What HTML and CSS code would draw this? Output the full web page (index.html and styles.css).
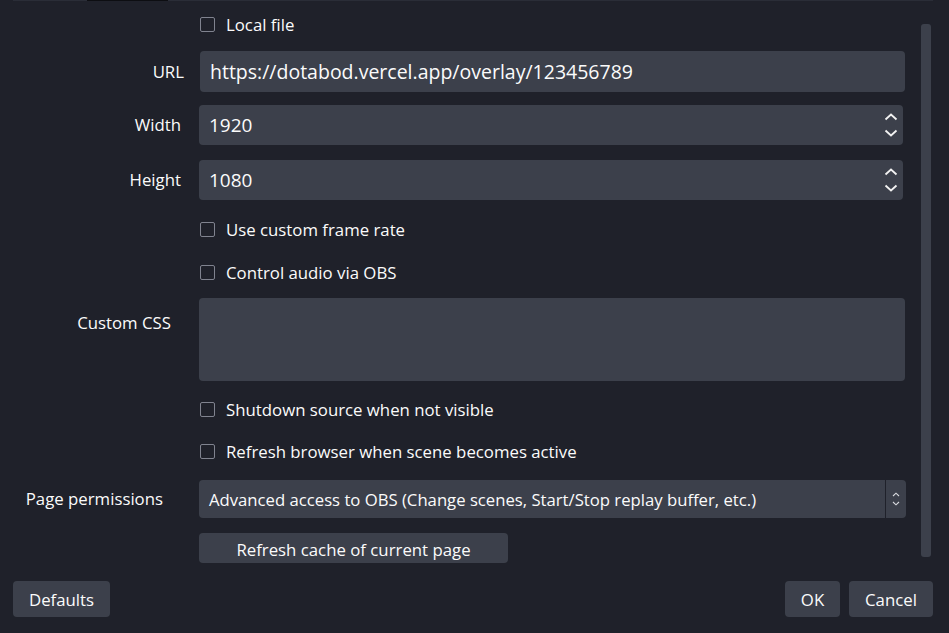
FILE: index.html
```html
<!DOCTYPE html>
<html>
<head>
<meta charset="utf-8">
<link rel="stylesheet" href="styles.css">
</head>
<body>
<div class="dialog">
  <div class="scroll-area">
    <div class="form">
      <div class="top-edge"><span class="top-dark"></span></div>

      <div class="row row-check r-local">
        <div class="label"></div>
        <label class="check"><span class="box"></span>Local file</label>
      </div>

      <div class="row r-url">
        <div class="label pad-url">URL</div>
        <div class="input url-input">https://dotabod.vercel.app/overlay/123456789</div>
      </div>

      <div class="row r-width">
        <div class="label pad-wh">Width</div>
        <div class="input spin">
          <span class="value">1920</span>
          <span class="spin-arrows">
            <svg width="14" height="26" viewBox="0 0 14 26"><path d="M1.5 7.5 L7 2.5 L12.5 7.5" fill="none" stroke="#f2f2f2" stroke-width="1.8"/><path d="M1.5 18.5 L7 23.5 L12.5 18.5" fill="none" stroke="#f2f2f2" stroke-width="1.8"/></svg>
          </span>
        </div>
      </div>

      <div class="row r-height">
        <div class="label pad-wh">Height</div>
        <div class="input spin">
          <span class="value">1080</span>
          <span class="spin-arrows">
            <svg width="14" height="26" viewBox="0 0 14 26"><path d="M1.5 7.5 L7 2.5 L12.5 7.5" fill="none" stroke="#f2f2f2" stroke-width="1.8"/><path d="M1.5 18.5 L7 23.5 L12.5 18.5" fill="none" stroke="#f2f2f2" stroke-width="1.8"/></svg>
          </span>
        </div>
      </div>

      <div class="row row-check r-fps">
        <div class="label"></div>
        <label class="check"><span class="box"></span>Use custom frame rate</label>
      </div>

      <div class="row row-check r-audio">
        <div class="label"></div>
        <label class="check"><span class="box"></span>Control audio via OBS</label>
      </div>

      <div class="row row-top r-css">
        <div class="label pad-css">Custom CSS</div>
        <div class="input textarea"></div>
      </div>

      <div class="row row-check r-shutdown">
        <div class="label"></div>
        <label class="check"><span class="box"></span>Shutdown source when not visible</label>
      </div>

      <div class="row row-check r-refresh">
        <div class="label"></div>
        <label class="check"><span class="box"></span>Refresh browser when scene becomes active</label>
      </div>

      <div class="row r-perm">
        <div class="label pad-perm">Page permissions</div>
        <div class="input select">
          <span class="select-text">Advanced access to OBS (Change scenes, Start/Stop replay buffer, etc.)</span>
          <span class="select-arrows">
            <svg width="8" height="14" viewBox="0 0 8 14"><path d="M1 4 L4 1.2 L7 4" fill="none" stroke="#d8d9de" stroke-width="1.1"/><path d="M1 10 L4 12.8 L7 10" fill="none" stroke="#d8d9de" stroke-width="1.1"/></svg>
          </span>
        </div>
      </div>

      <div class="row r-cache">
        <div class="label"></div>
        <button class="btn cache-btn">Refresh cache of current page</button>
      </div>
    </div>
    <div class="scrollbar"><div class="thumb"></div></div>
  </div>

  <div class="footer">
    <button class="btn foot-btn defaults">Defaults</button>
    <div class="footer-right">
      <button class="btn foot-btn ok">OK</button>
      <button class="btn foot-btn cancel">Cancel</button>
    </div>
  </div>
</div>
</body>
</html>
```

FILE: styles.css
```css
* { box-sizing: border-box; }

html, body {
  margin: 0;
  padding: 0;
  background: #1f212a;
}

body {
  width: 949px;
  height: 633px;
  overflow: hidden;
  font-family: "Open Sans", "Noto Sans", sans-serif;
  color: #fbfbfb;
  font-size: 16.8px;
}

.dialog {
  display: flex;
  flex-direction: column;
  height: 633px;
}

.scroll-area {
  display: flex;
  height: 565px;
}

.form {
  width: 921px;
  display: flex;
  flex-direction: column;
}

.top-edge {
  height: 1px;
  margin-left: 13px;
  width: 920px;
  background: #2a2d37;
  display: flex;
}

.top-dark {
  margin-left: 74px;
  width: 81px;
  height: 1px;
  background: #0d0e12;
}

.row {
  display: flex;
  align-items: center;
}

.row-top { align-items: flex-start; }

.label {
  width: 199px;
  flex: none;
  text-align: right;
  line-height: 22px;
}

.pad-url { padding-right: 15px; }
.pad-wh { padding-right: 18px; }
.pad-css { padding-right: 28px; padding-top: 14px; }
.pad-perm { padding-right: 36px; }

.row-check { height: 30px; }

.check {
  display: flex;
  align-items: center;
  gap: 11px;
  line-height: 22px;
  padding-left: 1px;
  padding-top: 1px;
}

.box {
  width: 15px;
  height: 15px;
  border: 1.5px solid #80838f;
  border-radius: 2px;
  flex: none;
}

.input {
  background: #3c404b;
  border-radius: 4px;
  display: flex;
  align-items: center;
}

.r-local { margin-top: 8px; }
.r-url { margin-top: 12px; }
.r-width { margin-top: 13px; }
.r-height { margin-top: 15px; }
.r-fps { margin-top: 14px; }
.r-audio { margin-top: 13px; }
.r-css { margin-top: 11px; }
.r-shutdown { margin-top: 13px; }
.r-refresh { margin-top: 12px; }
.r-perm { margin-top: 14px; }
.r-cache { margin-top: 15px; }

.url-input {
  width: 705px;
  height: 41px;
  margin-left: 1px;
  padding-left: 10px;
  font-size: 19.5px;
}

.spin {
  width: 704px;
  height: 40px;
  padding-left: 10px;
  font-size: 19px;
  justify-content: space-between;
}

.spin-arrows {
  display: flex;
  align-items: center;
  padding-right: 5px;
}

.spin-arrows svg { display: block; }

.textarea {
  width: 706px;
  height: 83px;
}

.select {
  width: 707px;
  height: 38px;
  justify-content: space-between;
  font-size: 16.7px;
}

.select-text {
  padding-left: 10px;
  white-space: nowrap;
}

.select-arrows {
  width: 21px;
  height: 38px;
  border-left: 1px solid #1f212a;
  display: flex;
  align-items: center;
  justify-content: center;
}

.select-arrows svg { display: block; }

.btn {
  font-family: "Open Sans", "Noto Sans", sans-serif;
  font-size: 16.8px;
  color: #fbfbfb;
  background: #3c404b;
  border: none;
  border-radius: 4px;
  padding: 0;
  display: flex;
  align-items: center;
  justify-content: center;
}

.cache-btn {
  width: 309px;
  height: 30px;
  line-height: 22px;
  padding-top: 3px;
}

.scrollbar {
  width: 28px;
  padding-top: 24px;
  display: flex;
  flex-direction: column;
}

.thumb {
  width: 10px;
  height: 533px;
  background: #3c404b;
  border-radius: 3px;
}

.footer {
  display: flex;
  justify-content: space-between;
  padding: 16px 16px 0 13px;
}

.footer-right {
  display: flex;
  gap: 9px;
}

.foot-btn { height: 36px; }
.defaults { width: 97px; }
.ok { width: 55px; }
.cancel { width: 84px; }
```
